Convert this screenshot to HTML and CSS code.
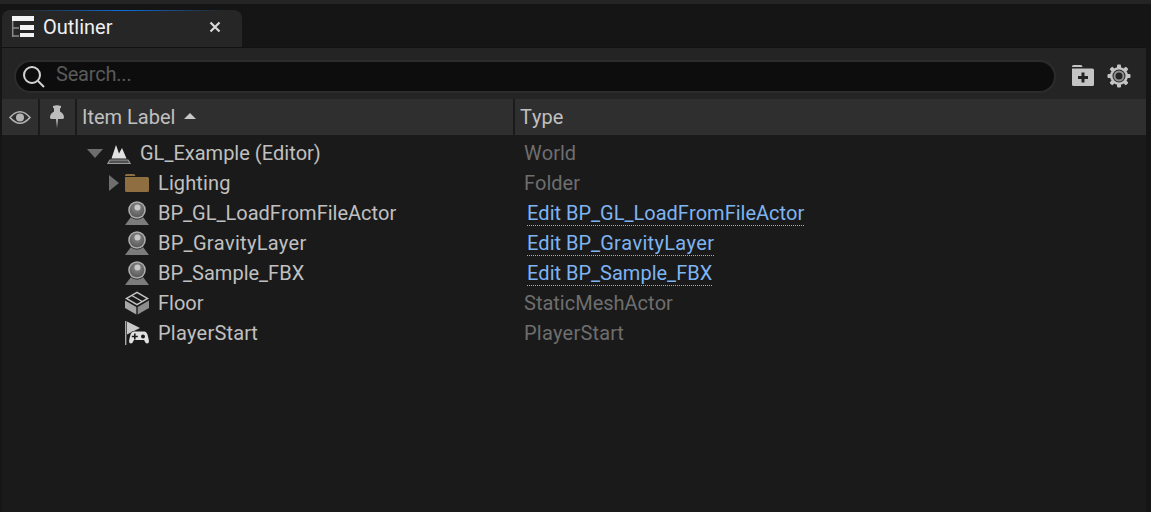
FILE: index.html
```html
<!DOCTYPE html>
<html lang="en">
<head>
<meta charset="utf-8">
<title>Outliner</title>
<link rel="stylesheet" href="styles.css">
</head>
<body>
<div class="app">
  <div class="topstrip"></div>
  <div class="tabbar">
    <div class="tab">
      <svg class="tab-icon" width="24" height="24" viewBox="0 0 24 24"><path fill="none" stroke="#8a8a8a" stroke-width="1.500" d="M1.700 6v16M1.700 13H8M1.700 21H8"/><path fill="#f2f2f2" d="M1 1h22v5H1z"/><path fill="#f2f2f2" d="M9 10h14v5H9zM9 18h14v4H9z"/></svg>
      <span class="tab-title">Outliner</span>
      <svg class="tab-close" width="12" height="12" viewBox="0 0 12 12"><path d="M1.500 1.500l9 9M10.500 1.500l-9 9" stroke="#d8d8d8" stroke-width="2.200" fill="none"/></svg>
    </div>
  </div>
  <div class="panel">
    <div class="toolbar">
      <div class="search">
        <svg class="search-icon" width="24" height="24" viewBox="0 0 24 24"><circle cx="10" cy="10" r="8" fill="none" stroke="#d4d4d4" stroke-width="2"/><path d="M16 16l6 6" stroke="#d4d4d4" stroke-width="2" fill="none"/></svg>
        <span class="search-text">Search...</span>
      </div>
      <svg class="tool-icon folder-add" width="22" height="21" viewBox="0 0 22 21"><path fill="#c4c4c4" fill-rule="evenodd" d="M0 1.500Q0 0 1.500 0h7q2 0 2 2H0zM0 3.500h20.500Q22 3.500 22 5v14.500q0 1.500-1.500 1.500h-19Q0 21 0 19.500zM9.500 7.500v3.500H6v3h3.500v3.500h3V14H16v-3h-3.500V7.500z"/></svg>
      <svg class="tool-icon gear" width="24" height="24" viewBox="0 0 24 24"><g fill="#c4c4c4"><rect x="10" y="0.500" width="4" height="23" rx="1"/><rect x="10" y="0.500" width="4" height="23" rx="1" transform="rotate(45 12 12)"/><rect x="10" y="0.500" width="4" height="23" rx="1" transform="rotate(90 12 12)"/><rect x="10" y="0.500" width="4" height="23" rx="1" transform="rotate(135 12 12)"/><circle cx="12" cy="12" r="9"/></g><circle cx="12" cy="12" r="6.500" fill="#242424"/><circle cx="12" cy="12" r="4.500" fill="none" stroke="#8f8f8f" stroke-width="2"/></svg>
    </div>
    <div class="header">
      <div class="hcell hcell-eye">
        <svg width="22" height="15" viewBox="0 0 22 15"><path d="M1 7.500q10-11.500 20 0q-10 11.500-20 0z" fill="none" stroke="#b4b4b4" stroke-width="1.600"/><circle cx="11" cy="7.500" r="4" fill="#b4b4b4"/></svg>
      </div>
      <div class="hcell hcell-pin">
        <svg width="14" height="24" viewBox="0 0 14 24"><path fill="#bdbdbd" d="M3 1q4-1.500 8 0v1.500l-1 1v3q4 2 4 6 0 1.500-2 1.500H8l-1 9-1-9H2q-2 0-2-1.500 0-4 4-6v-3l-1-1z"/></svg>
      </div>
      <div class="hcell hcell-label">Item Label<span class="sort-arrow"></span></div>
      <div class="hcell hcell-type">Type</div>
    </div>
    <div class="rows">
      <div class="row">
        <div class="cell-label depth-0">
          <span class="expander"><span class="tri-down"></span></span>
          <svg class="row-icon" width="24" height="24" viewBox="0 0 24 24"><path fill="#e2e2e2" d="M4.500 17.500L9 4l3 8.500L15 7l4.500 10.500z"/><path fill="#505050" stroke="#9a9a9a" stroke-width="1.200" d="M3 19h18l2.200 3.500H.8z"/></svg>
          <span class="name">GL_Example (Editor)</span>
        </div>
        <div class="cell-type">World</div>
      </div>
      <div class="row">
        <div class="cell-label depth-1">
          <span class="expander"><span class="tri-right"></span></span>
          <svg class="row-icon" width="24" height="24" viewBox="0 0 24 24"><path fill="#8f6f42" d="M0 4.500Q0 3 1.500 3h7q1.500 0 2 2H0zM0 6h22.500Q24 6 24 7.500v12q0 1.500-1.500 1.500h-21Q0 21 0 19.500z"/></svg>
          <span class="name fit-lighting">Lighting</span>
        </div>
        <div class="cell-type">Folder</div>
      </div>
      <div class="row">
        <div class="cell-label depth-1">
          <span class="expander"></span>
          <svg class="row-icon" width="24" height="24" viewBox="0 0 24 24"><use href="#bp"/></svg>
          <span class="name">BP_GL_LoadFromFileActor</span>
        </div>
        <div class="cell-type cell-link"><span class="link">Edit BP_GL_LoadFromFileActor</span></div>
      </div>
      <div class="row">
        <div class="cell-label depth-1">
          <span class="expander"></span>
          <svg class="row-icon" width="24" height="24" viewBox="0 0 24 24"><use href="#bp"/></svg>
          <span class="name fit-gravity">BP_GravityLayer</span>
        </div>
        <div class="cell-type cell-link"><span class="link"><span class="plain">Edit BP_</span><span class="fit-gravity-tail">GravityLayer</span></span></div>
      </div>
      <div class="row">
        <div class="cell-label depth-1">
          <span class="expander"></span>
          <svg class="row-icon" width="24" height="24" viewBox="0 0 24 24"><use href="#bp"/></svg>
          <span class="name">BP_Sample_FBX</span>
        </div>
        <div class="cell-type cell-link"><span class="link">Edit BP_Sample_FBX</span></div>
      </div>
      <div class="row">
        <div class="cell-label depth-1">
          <span class="expander"></span>
          <svg class="row-icon" width="24" height="24" viewBox="0 0 24 24"><path fill="#c4c4c4" fill-rule="evenodd" d="M12 .5L24 7.500 12 14.500 0 7.500zM12 2.200L21.100 7.500 17.200 9.800 8 4.500zM6.800 5.200L16 10.500 12 12.800 2.900 7.500z"/><path fill="#a6a6a6" d="M0 9.500l11.300 6.600V23.500L0 17z"/><path fill="#8c8c8c" d="M24 9.500L12.700 16.100V23.500L24 17z"/></svg>
          <span class="name">Floor</span>
        </div>
        <div class="cell-type">StaticMeshActor</div>
      </div>
      <div class="row">
        <div class="cell-label depth-1">
          <span class="expander"></span>
          <svg class="row-icon" width="24" height="24" viewBox="0 0 24 24"><path fill="#a8a8a8" d="M0 0h1.400v24H0z"/><path fill="#c9c9c9" d="M2 .5L15 7 2 13.500z"/><path fill="#e0e0e0" stroke="#1a1a1a" stroke-width="1.200" paint-order="stroke" d="M9 10.500h10q3 0 4 5l1 4.500q0 2.500-2 2.500-1.500 0-3-3.500H9q-1.500 3.500-3 3.500-2 0-2-2.500l1-4.500q1-5 4-5z"/><path fill="#1a1a1a" d="M9 12.500h1.600v2.200h2.200v1.600h-2.200v2.200H9v-2.200H6.800v-1.600H9z"/><circle cx="18" cy="15.500" r="2" fill="#1a1a1a"/></svg>
          <span class="name fit-player">PlayerStart</span>
        </div>
        <div class="cell-type fit-player">PlayerStart</div>
      </div>
    </div>
  </div>
</div>
<svg width="0" height="0" class="defs"><defs><radialGradient id="ball" cx="50%" cy="35%" r="70%"><stop offset="0" stop-color="#8a8a8a"/><stop offset="1" stop-color="#555"/></radialGradient><g id="bp"><path fill="#7c7c7c" d="M6 16h12l6 8H0z"/><circle cx="12" cy="9" r="9.500" fill="#1a1a1a"/><circle cx="12" cy="9" r="8.800" fill="#adadad"/><circle cx="12" cy="9" r="7.300" fill="url(#ball)"/><circle cx="12.500" cy="6.500" r="3" fill="#c8c8c8"/></g></defs></svg>
</body>
</html>
```
FILE: styles.css
```css
* { box-sizing: border-box; }
html, body { margin: 0; padding: 0; height: 100%; overflow: hidden; }
body { background: #151515; font-family: Roboto, "Liberation Sans", sans-serif; font-size: 20px; font-kerning: none; }
.defs { position: absolute; }
.app { display: flex; flex-direction: column; height: 512px; }
.topstrip { height: 4px; background: #242424; flex: none; }
.tabbar { height: 43px; flex: none; padding: 6px 0 0 2px; display: flex; }
.tab { width: 240px; height: 37px; background: #262626; border-radius: 8px 8px 0 0; display: flex; align-items: center; padding: 0 0 3px 9px; position: relative; overflow: hidden; }
.tab::before { content: ""; position: absolute; left: 0; right: 0; top: 0; height: 1px; background: linear-gradient(90deg, transparent 8%, #0a6fe0 50%, transparent 92%); }
.tab-title { color: #f0f0f0; margin-left: 8px; width: 166px; }
.panel { flex: 1; margin: 0 5px 0 2px; background: #1a1a1a; display: flex; flex-direction: column; border-top: 1px solid #111; }
.toolbar { height: 51px; background: #242424; display: flex; align-items: flex-start; padding: 12px 15px 0 12px; flex: none; }
.search { flex: 1; height: 33px; border-radius: 17px; background: #0d0d0d; border: 2px solid #2c2c2c; display: flex; align-items: flex-start; padding-left: 6px; gap: 10px; }
.search-icon { margin-top: 3px; flex: none; }
.search-text { color: #5a5a5a; line-height: 24px; letter-spacing: -0.22px; }
.tool-icon { flex: none; }
.folder-add { margin: 5px 0 0 16px; }
.gear { margin: 4px 0 0 13px; }
.header { height: 36px; background: #2f2f2f; display: flex; flex: none; color: #c0c0c0; }
.hcell { display: flex; align-items: center; border-right: 2px solid #1a1a1a; height: 100%; }
.hcell-eye { width: 38px; justify-content: center; }
.hcell-pin { width: 37px; justify-content: center; padding-right: 2px; }
.hcell-label { width: 438px; padding-left: 5px; }
.hcell-type { flex: 1; border-right: 0; padding-left: 5px; }
.sort-arrow { margin-left: 9px; width: 0; height: 0; border-left: 6px solid transparent; border-right: 6px solid transparent; border-bottom: 6px solid #c8c8c8; margin-top: -2px; }
.rows { padding-top: 3px; }
.row { height: 30px; display: flex; align-items: center; }
.cell-label { width: 513px; display: flex; align-items: center; color: #c0c0c0; }
.depth-0 { padding-left: 85px; }
.depth-1 { padding-left: 103px; }
.expander { width: 20px; flex: none; display: flex; align-items: center; justify-content: center; }
.tri-down { width: 0; height: 0; border-left: 8px solid transparent; border-right: 8px solid transparent; border-top: 9px solid #6e6e6e; margin-left: -4px; }
.tri-right { width: 0; height: 0; border-top: 8px solid transparent; border-bottom: 8px solid transparent; border-left: 10px solid #6e6e6e; margin-left: -2px; }
.row-icon { flex: none; margin-right: 9px; }
.cell-type { padding-left: 9px; color: #6e6e6e; }
.cell-link { padding-left: 12px; }
.link { color: #7fb4f2; border-bottom: 1px dotted #7fb4f2; line-height: 23px; display: inline-block; }
.fit-lighting { letter-spacing: 0.12px; }
.fit-gravity { letter-spacing: 0.27px; }
.fit-gravity-tail { letter-spacing: 0.33px; }
.fit-player { letter-spacing: 0.2px; }
```
